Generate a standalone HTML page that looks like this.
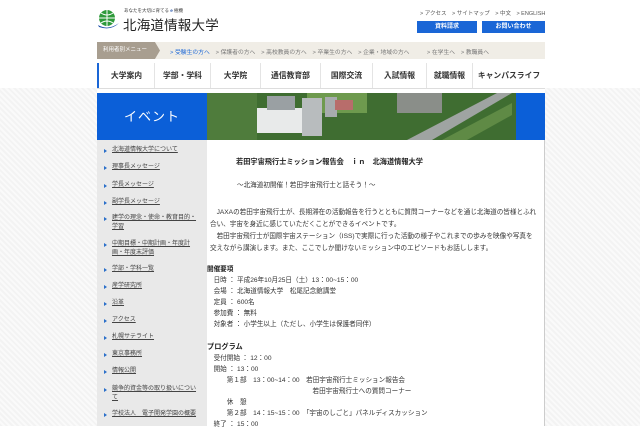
<!DOCTYPE html>
<html><head><meta charset="utf-8"><style>
*{margin:0;padding:0;box-sizing:border-box}
body{width:640px;height:426px;overflow:hidden;background:#fff;font-family:"Liberation Sans","Noto Sans CJK JP",sans-serif;color:#333;position:relative}
.a{position:absolute;white-space:nowrap}
.side{position:absolute;left:0;top:88px;width:97px;height:338px;background:repeating-linear-gradient(45deg,#f3f3f3 0 2px,#fafafa 2px 4px)}
.sideR{position:absolute;left:545px;top:88px;width:95px;height:338px;background:repeating-linear-gradient(45deg,#f3f3f3 0 2px,#fafafa 2px 4px)}
.nav div{position:absolute;top:63px;height:25px;line-height:25px;font-size:7.8px;font-weight:bold;text-align:center;border-left:1px solid #e4e4e4;color:#333}
.sb{position:absolute;left:97px;top:140px;width:110px;height:286px;background:#e9e9e9}
.li{position:absolute;left:112px;font-size:6px;color:#444;text-decoration:underline;line-height:9px;white-space:nowrap}
.li:before{content:"";position:absolute;left:-8px;top:3px;border-left:3px solid #2a6fc9;border-top:2px solid transparent;border-bottom:2px solid transparent}
.t{position:absolute;font-size:6.6px;color:#333;white-space:nowrap}
</style></head><body>
<svg class="a" style="left:97px;top:9px" width="22" height="22" viewBox="0 0 22 22"><circle cx="10" cy="9" r="8" fill="#2e9a3a"/><path d="M2 9h16M10 1v16M4 4q6 4 12 0M4 14q6-4 12 0" stroke="#fff" stroke-width="1" fill="none"/><path d="M1 16q10 6 21-2q-8 8-20 4z" fill="#1d4fa8"/></svg>
<div class="a" style="left:124px;top:8px;font-size:4.5px;color:#333">あなたを大切に育てる <span style="color:#1d4fa8;font-weight:bold">e</span> 極機</div>
<div class="a" style="left:123px;top:14px;font-size:13.5px;color:#222;letter-spacing:0.2px">北海道情報大学</div>
<div class="a" style="left:420px;top:9px;font-size:5.5px;color:#555">&gt; アクセス　&gt; サイトマップ　&gt; 中文　&gt; ENGLISH</div>
<div class="a" style="left:417px;top:21px;width:60px;height:12px;background:#1a66d6;color:#fff;font-size:6px;font-weight:bold;text-align:center;line-height:12px">資料請求</div>
<div class="a" style="left:482px;top:21px;width:63px;height:12px;background:#1a66d6;color:#fff;font-size:6px;font-weight:bold;text-align:center;line-height:12px">お問い合わせ</div>
<div class="a" style="left:97px;top:42px;width:448px;height:17px;background:#f0ede6"></div>
<div class="a" style="left:97px;top:42px;width:63px;height:17px;background:#a89e90;color:#fff;font-size:5.5px;line-height:17px;padding-left:6px;clip-path:polygon(0 0,92% 0,100% 50%,92% 100%,0 100%)">利用者別メニュー</div>
<div class="a" style="left:170px;top:47px;font-size:5.8px;color:#777"><span style="color:#1a66d6">&gt; 受験生の方へ</span>　&gt; 保護者の方へ　&gt; 高校教員の方へ　&gt; 卒業生の方へ　&gt; 企業・地域の方へ　　　&gt; 在学生へ　&gt; 教職員へ</div>
<div class="a" style="left:97px;top:63px;width:2px;height:25px;background:#1a66d6"></div>
<div class="nav">
<div style="left:99px;width:55px;border-left:none">大学案内</div>
<div style="left:154px;width:56px">学部・学科</div>
<div style="left:210px;width:50px">大学院</div>
<div style="left:260px;width:60px">通信教育部</div>
<div style="left:320px;width:52px">国際交流</div>
<div style="left:372px;width:54px">入試情報</div>
<div style="left:426px;width:46px">就職情報</div>
<div style="left:472px;width:73px">キャンパスライフ</div>
</div>
<div class="a" style="left:97px;top:88px;width:448px;height:1px;background:#ddd"></div>
<div class="side"></div><div class="sideR"></div>
<div class="a" style="left:97px;top:93px;width:110px;height:47px;background:#0b5fd8;color:#fff;font-size:13px;text-align:center;line-height:47px;letter-spacing:1px">イベント</div>
<svg class="a" style="left:207px;top:93px" width="309" height="47" viewBox="0 0 309 47">
<rect width="309" height="47" fill="#3f6d31"/>
<rect x="0" y="0" width="50" height="47" fill="#4f7c3c"/>
<rect x="100" y="0" width="60" height="20" fill="#6e9a4e"/>
<rect x="50" y="15" width="45" height="25" fill="#e8eaea"/>
<rect x="60" y="3" width="28" height="14" fill="#9aa0a3"/>
<rect x="95" y="5" width="20" height="38" fill="#b8bcbe"/>
<rect x="118" y="4" width="12" height="20" fill="#a7acae"/>
<rect x="128" y="7" width="18" height="10" fill="#b86d6b"/>
<rect x="190" y="0" width="45" height="20" fill="#8a8e89"/>
<path d="M200 47L290 0h15L225 47z" fill="#9fa4a2"/>
<path d="M235 47L305 10v12L260 47z" fill="#5f8a45"/>
</svg>
<div class="a" style="left:516px;top:93px;width:29px;height:47px;background:#0b5fd8"></div>
<div class="sb"></div>
<div class="a" style="left:207px;top:140px;width:338px;height:286px;background:#fff;border-right:1px solid #ccc"></div>
<div class="li" style="top:146px">北海道情報大学について</div>
<div class="li" style="top:163px">理事長メッセージ</div>
<div class="li" style="top:181px">学長メッセージ</div>
<div class="li" style="top:198px">副学長メッセージ</div>
<div class="li" style="top:214px">建学の理念・使命・教育目的・<br>学習</div>
<div class="li" style="top:240px">中期目標・中期計画・年度計<br>画・年度末評価</div>
<div class="li" style="top:265px">学部・学科一覧</div>
<div class="li" style="top:282px">産学研究所</div>
<div class="li" style="top:299px">沿革</div>
<div class="li" style="top:316px">アクセス</div>
<div class="li" style="top:333px">札幌サテライト</div>
<div class="li" style="top:350px">東京事務所</div>
<div class="li" style="top:367px">情報公開</div>
<div class="li" style="top:385px">競争的資金等の取り扱いについ<br>て</div>
<div class="li" style="top:410px">学校法人　電子開発学園の概要</div>
<div class="t" style="left:236px;top:157px;font-weight:bold;font-size:7.2px;color:#222">若田宇宙飛行士ミッション報告会　ｉｎ　北海道情報大学</div>
<div class="t" style="left:237px;top:179px">～北海道初開催！若田宇宙飛行士と話そう！～</div>
<div class="t" style="left:210px;top:207px;line-height:12px">　JAXAの若田宇宙飛行士が、長期滞在の活動報告を行うとともに質問コーナーなどを通じ北海道の皆様とふれ<br>合い、宇宙を身近に感じていただくことができるイベントです。<br>　若田宇宙飛行士が国際宇宙ステーション（ISS)で実際に行った活動の様子やこれまでの歩みを映像や写真を<br>交えながら講演します。また、ここでしか聞けないミッション中のエピソードもお話しします。</div>
<div class="t" style="left:207px;top:264px;line-height:11px"><b style="color:#222">開催要項</b><br>　日時 ： 平成26年10月25日（土）13：00~15：00<br>　会場 ： 北海道情報大学　松尾記念館講堂<br>　定員 ： 600名<br>　参加費 ： 無料<br>　対象者 ： 小学生以上（ただし、小学生は保護者同伴）</div>
<div class="t" style="left:207px;top:341px;line-height:11px"><b style="color:#222;font-size:7.2px">プログラム</b><br>　受付開始 ： 12：00<br>　開始 ： 13：00<br>　　　第１部　13：00~14：00　若田宇宙飛行士ミッション報告会<br>　　　　　　　　　　　　　　　　若田宇宙飛行士への質問コーナー<br>　　　休　憩<br>　　　第２部　14：15~15：00　「宇宙のしごと」パネルディスカッション<br>　終了 ： 15：00</div>
</body></html>
